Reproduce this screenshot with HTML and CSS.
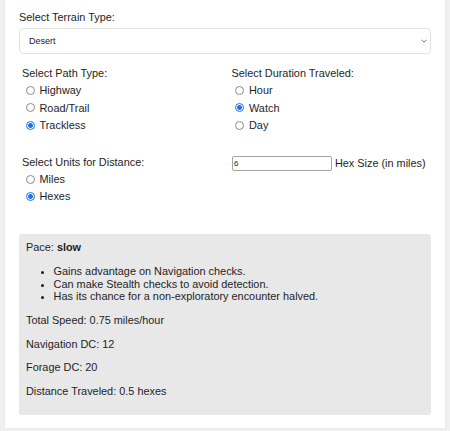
FILE: index.html
```html
<!DOCTYPE html>
<html lang="en">
<head>
<meta charset="utf-8">
<title>Travel Pace</title>
<link rel="stylesheet" href="styles.css">
</head>
<body>
<div class="card">
  <label class="label" for="terrain">Select Terrain Type:</label>
  <div class="select-wrap">
    <select id="terrain" class="select">
      <option>Desert</option>
    </select>
    <svg class="chevron" width="6" height="4" viewBox="0 0 6 4"><path d="M0.5 0.7 L3 3.2 L5.5 0.7" fill="none" stroke="#666" stroke-width="0.9"/></svg>
  </div>

  <div class="grid">
    <div class="group">
      <div class="label">Select Path Type:</div>
      <label class="opt"><input type="radio" name="path"><span>Highway</span></label>
      <label class="opt"><input type="radio" name="path"><span>Road/Trail</span></label>
      <label class="opt"><input type="radio" name="path" checked><span>Trackless</span></label>
    </div>
    <div class="group">
      <div class="label">Select Duration Traveled:</div>
      <label class="opt"><input type="radio" name="dur"><span>Hour</span></label>
      <label class="opt"><input type="radio" name="dur" checked><span>Watch</span></label>
      <label class="opt"><input type="radio" name="dur"><span>Day</span></label>
    </div>
    <div class="group">
      <div class="label">Select Units for Distance:</div>
      <label class="opt"><input type="radio" name="units"><span>Miles</span></label>
      <label class="opt"><input type="radio" name="units" checked><span>Hexes</span></label>
    </div>
    <div class="group">
      <div class="hex-row">
        <input type="text" class="hex-input" value="6">
        <span>Hex Size (in miles)</span>
      </div>
    </div>
  </div>

  <div class="result">
    <p class="first">Pace: <b>slow</b></p>
    <ul>
      <li>Gains advantage on Navigation checks.</li>
      <li>Can make Stealth checks to avoid detection.</li>
      <li>Has its chance for a non-exploratory encounter halved.</li>
    </ul>
    <p>Total Speed: 0.75 miles/hour</p>
    <p>Navigation DC: 12</p>
    <p>Forage DC: 20</p>
    <p>Distance Traveled: 0.5 hexes</p>
  </div>
</div>
</body>
</html>
```

FILE: styles.css
```css
html, body {
  margin: 0;
  padding: 0;
}
body {
  background: #f0f0f0;
  font-family: "Liberation Sans", Arial, sans-serif;
  font-size: 10.9px;
  line-height: 12.5px;
  color: #1e1e1e;
  height: 431px;
  overflow: hidden;
}
.card {
  margin: 0 5px;
  background: #fff;
  padding: 10.8px 14px 12.3px 14px;
  box-shadow: 0 0 2px rgba(0, 0, 0, 0.08);
}
.label {
  display: block;
  line-height: 12.5px;
}
.select-wrap {
  position: relative;
  margin-top: 4.7px;
}
.select {
  appearance: none;
  -webkit-appearance: none;
  display: block;
  width: 100%;
  height: 26px;
  margin: 0;
  border: 1px solid #e2e2e2;
  border-radius: 4px;
  background: #fff;
  padding: 0 0 0 9px;
  font-family: "Liberation Sans", Arial, sans-serif;
  font-size: 9px;
  color: #222;
  outline: none;
}
.chevron {
  position: absolute;
  right: 4px;
  top: 11px;
}
.grid {
  display: grid;
  grid-template-columns: 209.5px 1fr;
  row-gap: 22.6px;
  margin-top: 13.4px;
  padding-left: 3px;
}
.group .label {
  margin-bottom: 2px;
}
.opt {
  display: flex;
  align-items: center;
  height: 17.25px;
}
.opt input {
  appearance: none;
  -webkit-appearance: none;
  width: 9px;
  height: 9px;
  margin: 0 5px 0 3.5px;
  border: 1px solid #8a8a8a;
  border-radius: 50%;
  background: #fff;
  box-sizing: border-box;
  flex: none;
}
.opt input:checked {
  border-color: #1a73e8;
  background: radial-gradient(circle, #1a73e8 0 2.1px, #fff 2.6px);
}
.hex-row {
  display: flex;
  align-items: center;
  gap: 2.8px;
  margin-top: -0.4px;
}
.hex-input {
  box-sizing: border-box;
  width: 100.6px;
  height: 14.8px;
  margin: 0;
  border: 1px solid #a3a3a3;
  border-radius: 2px;
  padding: 0 0 0 1.6px;
  font-family: "Liberation Sans", Arial, sans-serif;
  font-size: 8px;
  color: #222;
  outline: none;
}
.result {
  margin-top: 28.9px;
  background: #e8e8e8;
  border-radius: 3px;
  padding: 6.7px 7px;
}
.result p {
  margin: 11.17px 0;
}
.result p.first {
  margin-top: 0;
}
.result ul {
  margin: 11.85px 0 11.5px 0;
  padding-left: 27.6px;
}
.result li {
  line-height: 12.5px;
}
```
